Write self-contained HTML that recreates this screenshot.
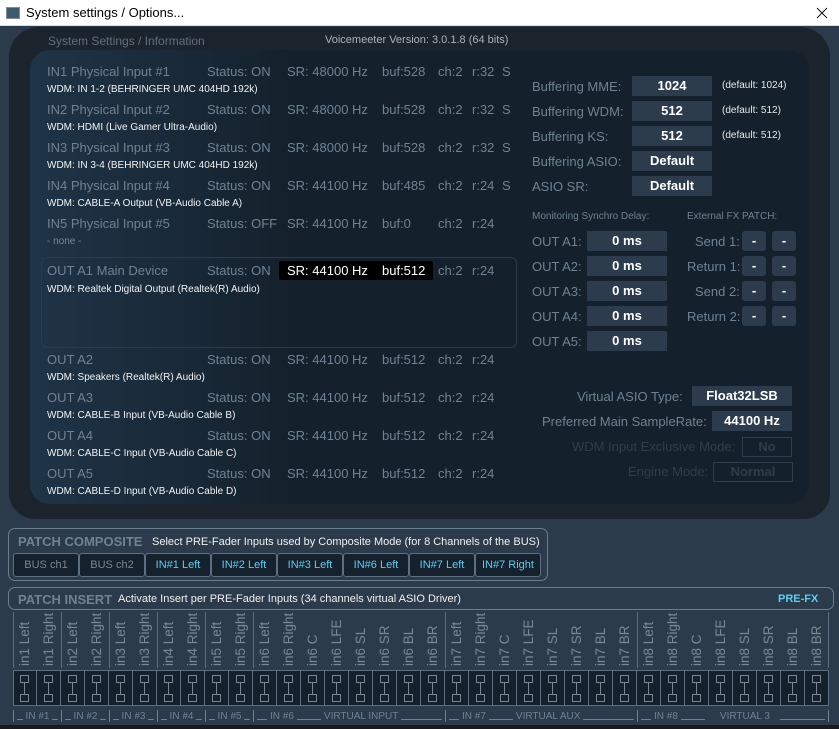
<!DOCTYPE html>
<html><head><meta charset="utf-8"><style>
*{margin:0;padding:0;box-sizing:border-box}
body{width:839px;height:729px;background:#2c3b4b;font-family:"Liberation Sans",sans-serif;position:relative;overflow:hidden}
.a{position:absolute;white-space:nowrap}
.tb{left:0;top:0;width:839px;height:26px;background:#fff;border-bottom:1px solid #ddd}
.l{font-size:13px;color:#6f8293}
.w{font-size:10px;color:#f2f2f2}
.box{position:absolute;background:#2c3c4d;color:#fff;font-weight:bold;font-size:13px;text-align:center;height:20px;line-height:20px}
.d{font-size:10px;color:#e8e8e8}
.btn{position:absolute;top:553px;width:66px;height:24px;border:1px solid #5d7081;border-radius:3px;background:#15212c;font-size:11px;text-align:center;line-height:22px}
.vt{position:absolute;top:612px;width:24px;height:56px;writing-mode:vertical-rl;transform:rotate(180deg);font-size:13.5px;color:#7a8795;text-align:left;line-height:24px;white-space:nowrap;overflow:visible;padding-top:2px}
.sw{position:absolute;top:670px;width:24px;height:36px;border-right:1px solid #5d7081}
.sw i{position:absolute;left:7px;width:9px;height:8px;border:1px solid #7a8795}
.sw b{position:absolute;left:11px;top:13px;width:1px;height:12px;background:#7a8795}
.g{position:absolute;top:710px;height:12px;display:flex;align-items:center;font-size:10px;color:#6f8293;border-left:1px solid #6f8293;white-space:nowrap}
.g s{display:block;flex:1;height:8px;border-bottom:1px solid #6f8293;margin:0 3px}
.g s.f{flex:0 0 10px}
</style></head><body>
<div class="a tb"></div>
<div class="a" style="left:6px;top:7px;width:14px;height:12px;background:#3b5b6f;border:1px solid #889"></div>
<div class="a" style="left:26px;top:5px;font-size:13px;color:#000">System settings / Options...</div>
<svg class="a" style="left:816px;top:7px" width="12" height="12" viewBox="0 0 12 12"><path d="M1 1L11 11M11 1L1 11" stroke="#111" stroke-width="1"/></svg>

<div class="a" style="left:9px;top:27px;width:821px;height:492px;background:#1b232c;border-radius:30px 30px 26px 26px"></div>
<div class="a" style="left:30px;top:50px;width:779px;height:454px;background:linear-gradient(90deg,#1f3447 0%,#14202b 35%,#14202b 100%);border-radius:20px"></div>
<div class="a" style="left:48px;top:34px;font-size:12px;color:#5f6f7e">System Settings / Information</div>
<div class="a" style="left:325px;top:34px;font-size:11px;color:#a7b3bd">Voicemeeter Version: 3.0.1.8 (64 bits)</div>

<div class="a" style="left:41px;top:257px;width:476px;height:91px;border:1px solid #2c3b4a;border-radius:6px"></div>

<div class="a l" style="left:47px;top:64px">IN1 Physical Input #1</div><div class="a l" style="left:207px;top:64px">Status: ON</div><div class="a l" style="left:287px;top:64px">SR: 48000 Hz</div><div class="a l" style="left:382px;top:64px">buf:528</div><div class="a l" style="left:438px;top:64px">ch:2</div><div class="a l" style="left:472px;top:64px">r:32</div><div class="a l" style="left:502px;top:64px">S</div>
<div class="a w" style="left:47px;top:84px">WDM: IN 1-2 (BEHRINGER UMC 404HD 192k)</div>
<div class="a l" style="left:47px;top:102px">IN2 Physical Input #2</div><div class="a l" style="left:207px;top:102px">Status: ON</div><div class="a l" style="left:287px;top:102px">SR: 48000 Hz</div><div class="a l" style="left:382px;top:102px">buf:528</div><div class="a l" style="left:438px;top:102px">ch:2</div><div class="a l" style="left:472px;top:102px">r:32</div><div class="a l" style="left:502px;top:102px">S</div>
<div class="a w" style="left:47px;top:122px">WDM: HDMI (Live Gamer Ultra-Audio)</div>
<div class="a l" style="left:47px;top:140px">IN3 Physical Input #3</div><div class="a l" style="left:207px;top:140px">Status: ON</div><div class="a l" style="left:287px;top:140px">SR: 48000 Hz</div><div class="a l" style="left:382px;top:140px">buf:528</div><div class="a l" style="left:438px;top:140px">ch:2</div><div class="a l" style="left:472px;top:140px">r:32</div><div class="a l" style="left:502px;top:140px">S</div>
<div class="a w" style="left:47px;top:160px">WDM: IN 3-4 (BEHRINGER UMC 404HD 192k)</div>
<div class="a l" style="left:47px;top:178px">IN4 Physical Input #4</div><div class="a l" style="left:207px;top:178px">Status: ON</div><div class="a l" style="left:287px;top:178px">SR: 44100 Hz</div><div class="a l" style="left:382px;top:178px">buf:485</div><div class="a l" style="left:438px;top:178px">ch:2</div><div class="a l" style="left:472px;top:178px">r:24</div><div class="a l" style="left:502px;top:178px">S</div>
<div class="a w" style="left:47px;top:198px">WDM: CABLE-A Output (VB-Audio Cable A)</div>
<div class="a l" style="left:47px;top:216px">IN5 Physical Input #5</div><div class="a l" style="left:207px;top:216px">Status: OFF</div><div class="a l" style="left:287px;top:216px">SR: 44100 Hz</div><div class="a l" style="left:382px;top:216px">buf:0</div><div class="a l" style="left:438px;top:216px">ch:2</div><div class="a l" style="left:472px;top:216px">r:24</div>
<div class="a w" style="left:47px;top:236px;color:#7a8795">- none -</div>
<div class="a l" style="left:47px;top:263px">OUT A1 Main Device</div><div class="a l" style="left:207px;top:263px">Status: ON</div>
<div class="a" style="left:279px;top:261px;width:154px;height:19px;background:#000;border-radius:2px"></div>
<div class="a l" style="left:287px;top:263px;color:#fff">SR: 44100 Hz</div><div class="a l" style="left:382px;top:263px;color:#fff">buf:512</div><div class="a l" style="left:438px;top:263px">ch:2</div><div class="a l" style="left:472px;top:263px">r:24</div>
<div class="a w" style="left:47px;top:284px">WDM: Realtek Digital Output (Realtek(R) Audio)</div>
<div class="a l" style="left:47px;top:352px">OUT A2</div><div class="a l" style="left:207px;top:352px">Status: ON</div><div class="a l" style="left:287px;top:352px">SR: 44100 Hz</div><div class="a l" style="left:382px;top:352px">buf:512</div><div class="a l" style="left:438px;top:352px">ch:2</div><div class="a l" style="left:472px;top:352px">r:24</div>
<div class="a w" style="left:47px;top:372px">WDM: Speakers (Realtek(R) Audio)</div>
<div class="a l" style="left:47px;top:390px">OUT A3</div><div class="a l" style="left:207px;top:390px">Status: ON</div><div class="a l" style="left:287px;top:390px">SR: 44100 Hz</div><div class="a l" style="left:382px;top:390px">buf:512</div><div class="a l" style="left:438px;top:390px">ch:2</div><div class="a l" style="left:472px;top:390px">r:24</div>
<div class="a w" style="left:47px;top:410px">WDM: CABLE-B Input (VB-Audio Cable B)</div>
<div class="a l" style="left:47px;top:428px">OUT A4</div><div class="a l" style="left:207px;top:428px">Status: ON</div><div class="a l" style="left:287px;top:428px">SR: 44100 Hz</div><div class="a l" style="left:382px;top:428px">buf:512</div><div class="a l" style="left:438px;top:428px">ch:2</div><div class="a l" style="left:472px;top:428px">r:24</div>
<div class="a w" style="left:47px;top:448px">WDM: CABLE-C Input (VB-Audio Cable C)</div>
<div class="a l" style="left:47px;top:466px">OUT A5</div><div class="a l" style="left:207px;top:466px">Status: ON</div><div class="a l" style="left:287px;top:466px">SR: 44100 Hz</div><div class="a l" style="left:382px;top:466px">buf:512</div><div class="a l" style="left:438px;top:466px">ch:2</div><div class="a l" style="left:472px;top:466px">r:24</div>
<div class="a w" style="left:47px;top:486px">WDM: CABLE-D Input (VB-Audio Cable D)</div>

<div class="a l" style="left:532px;top:79px">Buffering MME:</div><div class="box" style="left:632px;top:76px;width:80px">1024</div><div class="a d" style="left:722px;top:80px">(default: 1024)</div>
<div class="a l" style="left:532px;top:104px">Buffering WDM:</div><div class="box" style="left:632px;top:101px;width:80px">512</div><div class="a d" style="left:722px;top:105px">(default: 512)</div>
<div class="a l" style="left:532px;top:129px">Buffering KS:</div><div class="box" style="left:632px;top:126px;width:80px">512</div><div class="a d" style="left:722px;top:130px">(default: 512)</div>
<div class="a l" style="left:532px;top:154px">Buffering ASIO:</div><div class="box" style="left:632px;top:151px;width:80px">Default</div>
<div class="a l" style="left:532px;top:179px">ASIO SR:</div><div class="box" style="left:632px;top:176px;width:80px">Default</div>
<div class="a" style="left:532px;top:211px;font-size:10px;color:#6f8293">Monitoring Synchro Delay:</div>
<div class="a" style="left:687px;top:211px;font-size:10px;color:#6f8293">External FX PATCH:</div>
<div class="a l" style="left:532px;top:234px">OUT A1:</div><div class="box" style="left:587px;top:231px;width:80px">0 ms</div>
<div class="a l" style="left:532px;top:259px">OUT A2:</div><div class="box" style="left:587px;top:256px;width:80px">0 ms</div>
<div class="a l" style="left:532px;top:284px">OUT A3:</div><div class="box" style="left:587px;top:281px;width:80px">0 ms</div>
<div class="a l" style="left:532px;top:309px">OUT A4:</div><div class="box" style="left:587px;top:306px;width:80px">0 ms</div>
<div class="a l" style="left:532px;top:334px">OUT A5:</div><div class="box" style="left:587px;top:331px;width:80px">0 ms</div>
<div class="a l" style="left:695px;top:234px">Send 1:</div><div class="box" style="left:742px;top:231px;width:24px;border-radius:3px">-</div><div class="box" style="left:772px;top:231px;width:24px;border-radius:3px">-</div>
<div class="a l" style="left:687px;top:259px">Return 1:</div><div class="box" style="left:742px;top:256px;width:24px;border-radius:3px">-</div><div class="box" style="left:772px;top:256px;width:24px;border-radius:3px">-</div>
<div class="a l" style="left:695px;top:284px">Send 2:</div><div class="box" style="left:742px;top:281px;width:24px;border-radius:3px">-</div><div class="box" style="left:772px;top:281px;width:24px;border-radius:3px">-</div>
<div class="a l" style="left:687px;top:309px">Return 2:</div><div class="box" style="left:742px;top:306px;width:24px;border-radius:3px">-</div><div class="box" style="left:772px;top:306px;width:24px;border-radius:3px">-</div>

<div class="a l" style="left:577px;top:389px">Virtual ASIO Type:</div><div class="box" style="left:692px;top:386px;width:100px">Float32LSB</div>
<div class="a l" style="left:542px;top:414px">Preferred Main SampleRate:</div><div class="box" style="left:712px;top:411px;width:80px">44100 Hz</div>
<div class="a l" style="left:572px;top:439px;color:#2f3e4c">WDM Input Exclusive Mode:</div><div class="box" style="left:742px;top:437px;width:50px;background:none;border:1px solid #2f3e4c;color:#2f3e4c;line-height:18px">No</div>
<div class="a l" style="left:628px;top:464px;color:#2f3e4c">Engine Mode:</div><div class="box" style="left:713px;top:462px;width:80px;background:none;border:1px solid #2f3e4c;color:#2f3e4c;line-height:18px">Normal</div>

<div class="a" style="left:8px;top:528px;width:540px;height:53px;border:1px solid #6a7e90;border-radius:7px"></div>
<div class="a" style="left:18px;top:534px;font-size:13px;font-weight:bold;color:#6f8293">PATCH COMPOSITE</div>
<div class="a" style="left:152px;top:536px;font-size:11px;color:#f0f0f0">Select PRE-Fader Inputs used by Composite Mode (for 8 Channels of the BUS)</div>
<div class="btn" style="left:13px;color:#7a8795">BUS ch1</div>
<div class="btn" style="left:79px;color:#7a8795">BUS ch2</div>
<div class="btn" style="left:145px;color:#5ccdf2">IN#1 Left</div>
<div class="btn" style="left:211px;color:#5ccdf2">IN#2 Left</div>
<div class="btn" style="left:277px;color:#5ccdf2">IN#3 Left</div>
<div class="btn" style="left:343px;color:#5ccdf2">IN#6 Left</div>
<div class="btn" style="left:409px;color:#5ccdf2">IN#7 Left</div>
<div class="btn" style="left:475px;color:#5ccdf2">IN#7 Right</div>

<div class="a" style="left:8px;top:587px;width:826px;height:23px;border:1px solid #6a7e90;border-radius:7px"></div>
<div class="a" style="left:18px;top:592px;font-size:13px;font-weight:bold;color:#6f8293">PATCH INSERT</div>
<div class="a" style="left:118px;top:593px;font-size:11px;color:#f0f0f0">Activate Insert per PRE-Fader Inputs (34 channels virtual ASIO Driver)</div>
<div class="a" style="left:778px;top:593px;font-size:11px;font-weight:bold;color:#5ccdf2">PRE-FX</div>

<div class="a" style="left:13px;top:670px;width:816px;height:36px;background:#14202b;border:1px solid #5d7081"></div>
<div class="vt" style="left:13px">in1 Left</div><div class="vt" style="left:37px">in1 Right</div>
<div class="vt" style="left:61px">in2 Left</div><div class="vt" style="left:85px">in2 Right</div>
<div class="vt" style="left:109px">in3 Left</div><div class="vt" style="left:133px">in3 Right</div>
<div class="vt" style="left:157px">in4 Left</div><div class="vt" style="left:181px">in4 Right</div>
<div class="vt" style="left:205px">in5 Left</div><div class="vt" style="left:229px">in5 Right</div>
<div class="vt" style="left:253px">in6 Left</div><div class="vt" style="left:277px">in6 Right</div>
<div class="vt" style="left:301px">in6 C</div><div class="vt" style="left:325px">in6 LFE</div>
<div class="vt" style="left:349px">in6 SL</div><div class="vt" style="left:373px">in6 SR</div>
<div class="vt" style="left:397px">in6 BL</div><div class="vt" style="left:421px">in6 BR</div>
<div class="vt" style="left:445px">in7 Left</div><div class="vt" style="left:469px">in7 Right</div>
<div class="vt" style="left:493px">in7 C</div><div class="vt" style="left:517px">in7 LFE</div>
<div class="vt" style="left:541px">in7 SL</div><div class="vt" style="left:565px">in7 SR</div>
<div class="vt" style="left:589px">in7 BL</div><div class="vt" style="left:613px">in7 BR</div>
<div class="vt" style="left:637px">in8 Left</div><div class="vt" style="left:661px">in8 Right</div>
<div class="vt" style="left:685px">in8 C</div><div class="vt" style="left:709px">in8 LFE</div>
<div class="vt" style="left:733px">in8 SL</div><div class="vt" style="left:757px">in8 SR</div>
<div class="vt" style="left:781px">in8 BL</div><div class="vt" style="left:805px">in8 BR</div>
<div class="a" style="left:13px;top:612px;width:1px;height:56px;background:#5d7081"></div>
<div class="a" style="left:61px;top:612px;width:1px;height:56px;background:#5d7081"></div>
<div class="a" style="left:109px;top:612px;width:1px;height:56px;background:#5d7081"></div>
<div class="a" style="left:157px;top:612px;width:1px;height:56px;background:#5d7081"></div>
<div class="a" style="left:205px;top:612px;width:1px;height:56px;background:#5d7081"></div>
<div class="a" style="left:253px;top:612px;width:1px;height:56px;background:#5d7081"></div>
<div class="a" style="left:445px;top:612px;width:1px;height:56px;background:#5d7081"></div>
<div class="a" style="left:637px;top:612px;width:1px;height:56px;background:#5d7081"></div>
<div class="a" style="left:828px;top:612px;width:1px;height:56px;background:#5d7081"></div>

<div class="sw" style="left:13px"><i style="top:5px"></i><b></b><i style="top:24px"></i></div>
<div class="sw" style="left:37px"><i style="top:5px"></i><b></b><i style="top:24px"></i></div>
<div class="sw" style="left:61px"><i style="top:5px"></i><b></b><i style="top:24px"></i></div>
<div class="sw" style="left:85px"><i style="top:5px"></i><b></b><i style="top:24px"></i></div>
<div class="sw" style="left:109px"><i style="top:5px"></i><b></b><i style="top:24px"></i></div>
<div class="sw" style="left:133px"><i style="top:5px"></i><b></b><i style="top:24px"></i></div>
<div class="sw" style="left:157px"><i style="top:5px"></i><b></b><i style="top:24px"></i></div>
<div class="sw" style="left:181px"><i style="top:5px"></i><b></b><i style="top:24px"></i></div>
<div class="sw" style="left:205px"><i style="top:5px"></i><b></b><i style="top:24px"></i></div>
<div class="sw" style="left:229px"><i style="top:5px"></i><b></b><i style="top:24px"></i></div>
<div class="sw" style="left:253px"><i style="top:5px"></i><b></b><i style="top:24px"></i></div>
<div class="sw" style="left:277px"><i style="top:5px"></i><b></b><i style="top:24px"></i></div>
<div class="sw" style="left:301px"><i style="top:5px"></i><b></b><i style="top:24px"></i></div>
<div class="sw" style="left:325px"><i style="top:5px"></i><b></b><i style="top:24px"></i></div>
<div class="sw" style="left:349px"><i style="top:5px"></i><b></b><i style="top:24px"></i></div>
<div class="sw" style="left:373px"><i style="top:5px"></i><b></b><i style="top:24px"></i></div>
<div class="sw" style="left:397px"><i style="top:5px"></i><b></b><i style="top:24px"></i></div>
<div class="sw" style="left:421px"><i style="top:5px"></i><b></b><i style="top:24px"></i></div>
<div class="sw" style="left:445px"><i style="top:5px"></i><b></b><i style="top:24px"></i></div>
<div class="sw" style="left:469px"><i style="top:5px"></i><b></b><i style="top:24px"></i></div>
<div class="sw" style="left:493px"><i style="top:5px"></i><b></b><i style="top:24px"></i></div>
<div class="sw" style="left:517px"><i style="top:5px"></i><b></b><i style="top:24px"></i></div>
<div class="sw" style="left:541px"><i style="top:5px"></i><b></b><i style="top:24px"></i></div>
<div class="sw" style="left:565px"><i style="top:5px"></i><b></b><i style="top:24px"></i></div>
<div class="sw" style="left:589px"><i style="top:5px"></i><b></b><i style="top:24px"></i></div>
<div class="sw" style="left:613px"><i style="top:5px"></i><b></b><i style="top:24px"></i></div>
<div class="sw" style="left:637px"><i style="top:5px"></i><b></b><i style="top:24px"></i></div>
<div class="sw" style="left:661px"><i style="top:5px"></i><b></b><i style="top:24px"></i></div>
<div class="sw" style="left:685px"><i style="top:5px"></i><b></b><i style="top:24px"></i></div>
<div class="sw" style="left:709px"><i style="top:5px"></i><b></b><i style="top:24px"></i></div>
<div class="sw" style="left:733px"><i style="top:5px"></i><b></b><i style="top:24px"></i></div>
<div class="sw" style="left:757px"><i style="top:5px"></i><b></b><i style="top:24px"></i></div>
<div class="sw" style="left:781px"><i style="top:5px"></i><b></b><i style="top:24px"></i></div>
<div class="sw" style="left:805px"><i style="top:5px"></i><b></b><i style="top:24px"></i></div>

<div class="g" style="left:13px;width:48px"><s></s><span>IN #1</span><s></s></div>
<div class="g" style="left:61px;width:48px"><s></s><span>IN #2</span><s></s></div>
<div class="g" style="left:109px;width:48px"><s></s><span>IN #3</span><s></s></div>
<div class="g" style="left:157px;width:48px"><s></s><span>IN #4</span><s></s></div>
<div class="g" style="left:205px;width:48px"><s></s><span>IN #5</span><s></s></div>
<div class="g" style="left:253px;width:192px"><s class="f"></s><span>IN #6</span><s class="f" style="flex-basis:24px"></s><span>VIRTUAL INPUT</span><s></s></div>
<div class="g" style="left:445px;width:192px"><s class="f"></s><span>IN #7</span><s class="f" style="flex-basis:24px"></s><span>VIRTUAL AUX</span><s></s></div>
<div class="g" style="left:637px;width:192px;border-right:1px solid #6f8293"><s class="f"></s><span>IN #8</span><s class="f" style="flex-basis:24px"></s><span style="margin-left:12px">VIRTUAL 3</span><s style="margin-left:10px"></s></div>
<div class="a" style="left:0;top:725px;width:839px;height:4px;background:#1a1a1a"></div>
</body></html>
